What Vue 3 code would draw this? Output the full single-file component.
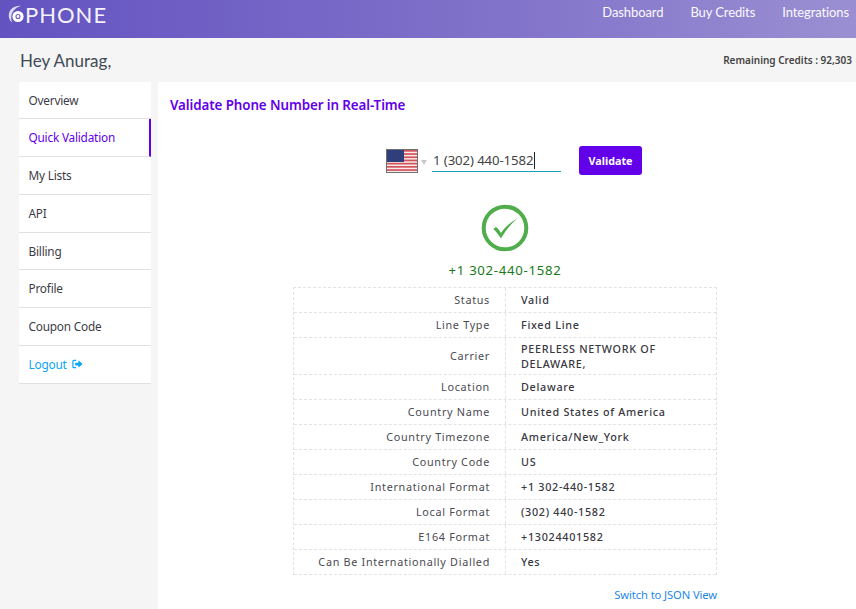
<script setup>
const menu = [
  { label: 'Overview' },
  { label: 'Quick Validation', active: true },
  { label: 'My Lists' },
  { label: 'API' },
  { label: 'Billing' },
  { label: 'Profile' },
  { label: 'Coupon Code' }
]
const rows = [
  ['Status', 'Valid'],
  ['Line Type', 'Fixed Line'],
  ['Carrier', 'PEERLESS NETWORK OF DELAWARE,'],
  ['Location', 'Delaware'],
  ['Country Name', 'United States of America'],
  ['Country Timezone', 'America/New_York'],
  ['Country Code', 'US'],
  ['International Format', '+1 302-440-1582'],
  ['Local Format', '(302) 440-1582'],
  ['E164 Format', '+13024401582'],
  ['Can Be Internationally Dialled', 'Yes']
]
const stripes = [0, 1, 2, 3, 4, 5, 6]
</script>

<template>
  <div class="page">
    <header class="topbar">
      <div class="logo">
        <svg width="17" height="19" viewBox="0 0 17 19" class="logo-mark">
          <path d="M13 .8C6 .5 .8 4.500 .8 10.500c0 3 1.200 5.500 3.500 7.300C2.800 14.500 2.800 9.500 5 6.500 7 3.500 9.800 1.800 13 .8z" fill="#fff" opacity=".8" />
          <circle cx="10" cy="11.500" r="5.600" fill="#fff" />
          <circle cx="10" cy="11.500" r="2" fill="none" stroke="#6b5cc4" stroke-width="1.100" />
        </svg>
        <span>PHONE</span>
      </div>
      <nav class="nav">
        <a>Dashboard</a>
        <a>Buy Credits</a>
        <a>Integrations</a>
      </nav>
    </header>

    <div class="greeting">
      <h1>Hey Anurag,</h1>
      <p>Remaining Credits : 92,303</p>
    </div>

    <div class="body">
      <aside class="side">
        <a v-for="m in menu" :key="m.label" class="item" :class="{ active: m.active }">{{ m.label }}</a>
        <a class="item logout">
          Logout
          <svg width="11" height="10" viewBox="0 0 12 10">
            <path d="M4.500 1H2a1 1 0 0 0-1 1v6a1 1 0 0 0 1 1h2.500" fill="none" stroke="#0aa5f5" stroke-width="1.300" />
            <path d="M3.500 3.500H7V1l4.500 4L7 9V6.500H3.500z" fill="#0aa5f5" />
          </svg>
        </a>
      </aside>

      <main class="main">
        <h2>Validate Phone Number in Real-Time</h2>

        <div class="form">
          <svg class="flag" width="32" height="24" viewBox="0 0 32 24">
            <rect width="32" height="24" fill="#fbeaea" />
            <rect v-for="s in stripes" :key="s" x="0" :y="1 + s * 3.200" width="32" height="1.700" fill="#d0545c" />
            <rect width="18" height="13" x="0" y="0" fill="#2f3f7c" />
            <rect x=".5" y=".5" width="31" height="23" fill="none" stroke="#707070" />
          </svg>
          <span class="caret-down"></span>
          <div class="input">1 (302) 440-1582<i class="cursor"></i></div>
          <button class="btn">Validate</button>
        </div>

        <div class="result">
          <svg width="48" height="48" viewBox="0 0 48 48">
            <circle cx="24" cy="24" r="21.300" fill="none" stroke="#4fae4b" stroke-width="4" />
            <path d="M12.300 25 15 23C17 24.500 19 27 20 29 24 23 30 18 36.300 14.300 30 20 24 27 20 34.500 18 31 15 27.500 12.300 25z" fill="#4fae4b" />
          </svg>
          <div class="number">+1 302-440-1582</div>
        </div>

        <div class="table">
          <div v-for="r in rows" :key="r[0]" class="row">
            <div class="k">{{ r[0] }}</div>
            <div class="v"><span>{{ r[1] }}</span></div>
          </div>
        </div>

        <a class="json">Switch to JSON View</a>
      </main>
    </div>
  </div>
</template>

<style>
html, body { margin: 0; background: #f5f5f5; }
</style>

<style scoped>
.page {
  width: 856px;
  height: 609px;
  overflow: hidden;
  background: #f5f5f5;
  font-family: "Noto Sans", "Open Sans", sans-serif;
  color: #3c3c46;
}
.topbar {
  height: 38px;
  box-sizing: border-box;
  display: flex;
  align-items: flex-start;
  justify-content: space-between;
  padding-left: 8px;
  background: linear-gradient(90deg, #6353c1 0%, #8273ca 60%, #9a8fd2 100%);
  color: #fff;
}
.logo {
  display: flex;
  align-items: center;
  height: 28px;
  font-family: "Lato", sans-serif;
  font-size: 22px;
  letter-spacing: 1px;
  color: #f4f2fb;
}
.nav {
  display: flex;
  gap: 27px;
  padding: 3px 7px 0 0;
  font-family: "Lato", sans-serif;
  font-size: 13px;
  line-height: 18px;
  letter-spacing: -.1px;
  color: #fbfaff;
}
.greeting {
  display: flex;
  justify-content: space-between;
  align-items: center;
  height: 44px;
  padding: 0 4px 0 20px;
}
.greeting h1 {
  margin: 0;
  font-family: "Lato", sans-serif;
  font-size: 17px;
  font-weight: 400;
  color: #3f4a55;
}
.greeting p {
  margin: 0;
  font-size: 10px;
  font-weight: 600;
  color: #444;
}
.body {
  display: flex;
  align-items: flex-start;
  padding-left: 19px;
  gap: 7px;
}
.side {
  width: 132px;
  flex: none;
  background: #fff;
}
.item {
  display: block;
  height: 37.850px;
  line-height: 37px;
  box-sizing: border-box;
  padding-left: 9.500px;
  border-bottom: 1px solid #e0e0e0;
  font-size: 11.800px;
  letter-spacing: -.2px;
  color: #3c3c46;
}
.item:first-child { height: 37px; }
.item.active {
  color: #6200ea;
  border-right: 2px solid #6200ea;
}
.logout {
  color: #0aa5f5;
  display: flex;
  align-items: center;
  gap: 5px;
}
.main {
  flex: 1;
  height: 527px;
  background: #fff;
  position: relative;
  display: flex;
  flex-direction: column;
}
h2 {
  margin: 14px 0 0 12px;
  font-size: 13.400px;
  line-height: 18px;
  font-weight: 600;
  color: #6200ea;
  letter-spacing: -.1px;
}
.form {
  display: flex;
  align-items: center;
  margin: 32px 0 0 228px;
  height: 29px;
}
.flag { flex: none; }
.caret-down {
  width: 0;
  height: 0;
  margin: 3px 5px 0 3px;
  border-left: 3px solid transparent;
  border-right: 3px solid transparent;
  border-top: 5px solid #c9c9c9;
}
.input {
  width: 129px;
  height: 23px;
  box-sizing: border-box;
  border-bottom: 1px solid #1aa3b8;
  padding-left: 1px;
  font-size: 13.200px;
  line-height: 22px;
  letter-spacing: -.1px;
  color: #444;
}
.cursor {
  display: inline-block;
  width: 1px;
  height: 17px;
  margin-left: 1px;
  background: #222;
  vertical-align: -4px;
}
.btn {
  margin-left: 18px;
  width: 63px;
  height: 29px;
  border: 0;
  border-radius: 3px;
  background: #6200ea;
  color: #fff;
  font-family: inherit;
  font-size: 10.800px;
  font-weight: 700;
  padding: 0;
}
.result {
  display: flex;
  flex-direction: column;
  align-items: center;
  margin: 0 0 0 -4px;
  padding-top: 29px;
}
.number {
  margin-top: 9px;
  font-size: 13.200px;
  line-height: 18px;
  letter-spacing: .7px;
  color: #1a7a1a;
}
.table {
  margin: 8px 0 0 135px;
  width: 424px;
  border-top: 1px dashed #e3e3e3;
  border-left: 1px dashed #e3e3e3;
  border-right: 1px dashed #e3e3e3;
  box-sizing: border-box;
}
.row {
  display: grid;
  grid-template-columns: 211px 1fr;
  border-bottom: 1px dashed #e3e3e3;
  font-size: 10.800px;
  line-height: 15px;
  letter-spacing: .7px;
}
.k {
  padding: 0 15px 2px 0;
  text-align: right;
  align-self: center;
  color: #4a4a52;
}
.v {
  display: flex;
  align-items: center;
  min-height: 24px;
  box-sizing: border-box;
  padding: 2px 30px 4px 15px;
  border-left: 1px dashed #e3e3e3;
  font-weight: 500;
  letter-spacing: .7px;
  color: #38383f;
}
.row:nth-child(3) .v { padding: 3px 30px 3px 15px; }
.json {
  margin: 12px 0 0 auto;
  padding-right: 139px;
  font-size: 11.200px;
  line-height: 15px;
  letter-spacing: -.1px;
  color: #1e88e5;
}
</style>
